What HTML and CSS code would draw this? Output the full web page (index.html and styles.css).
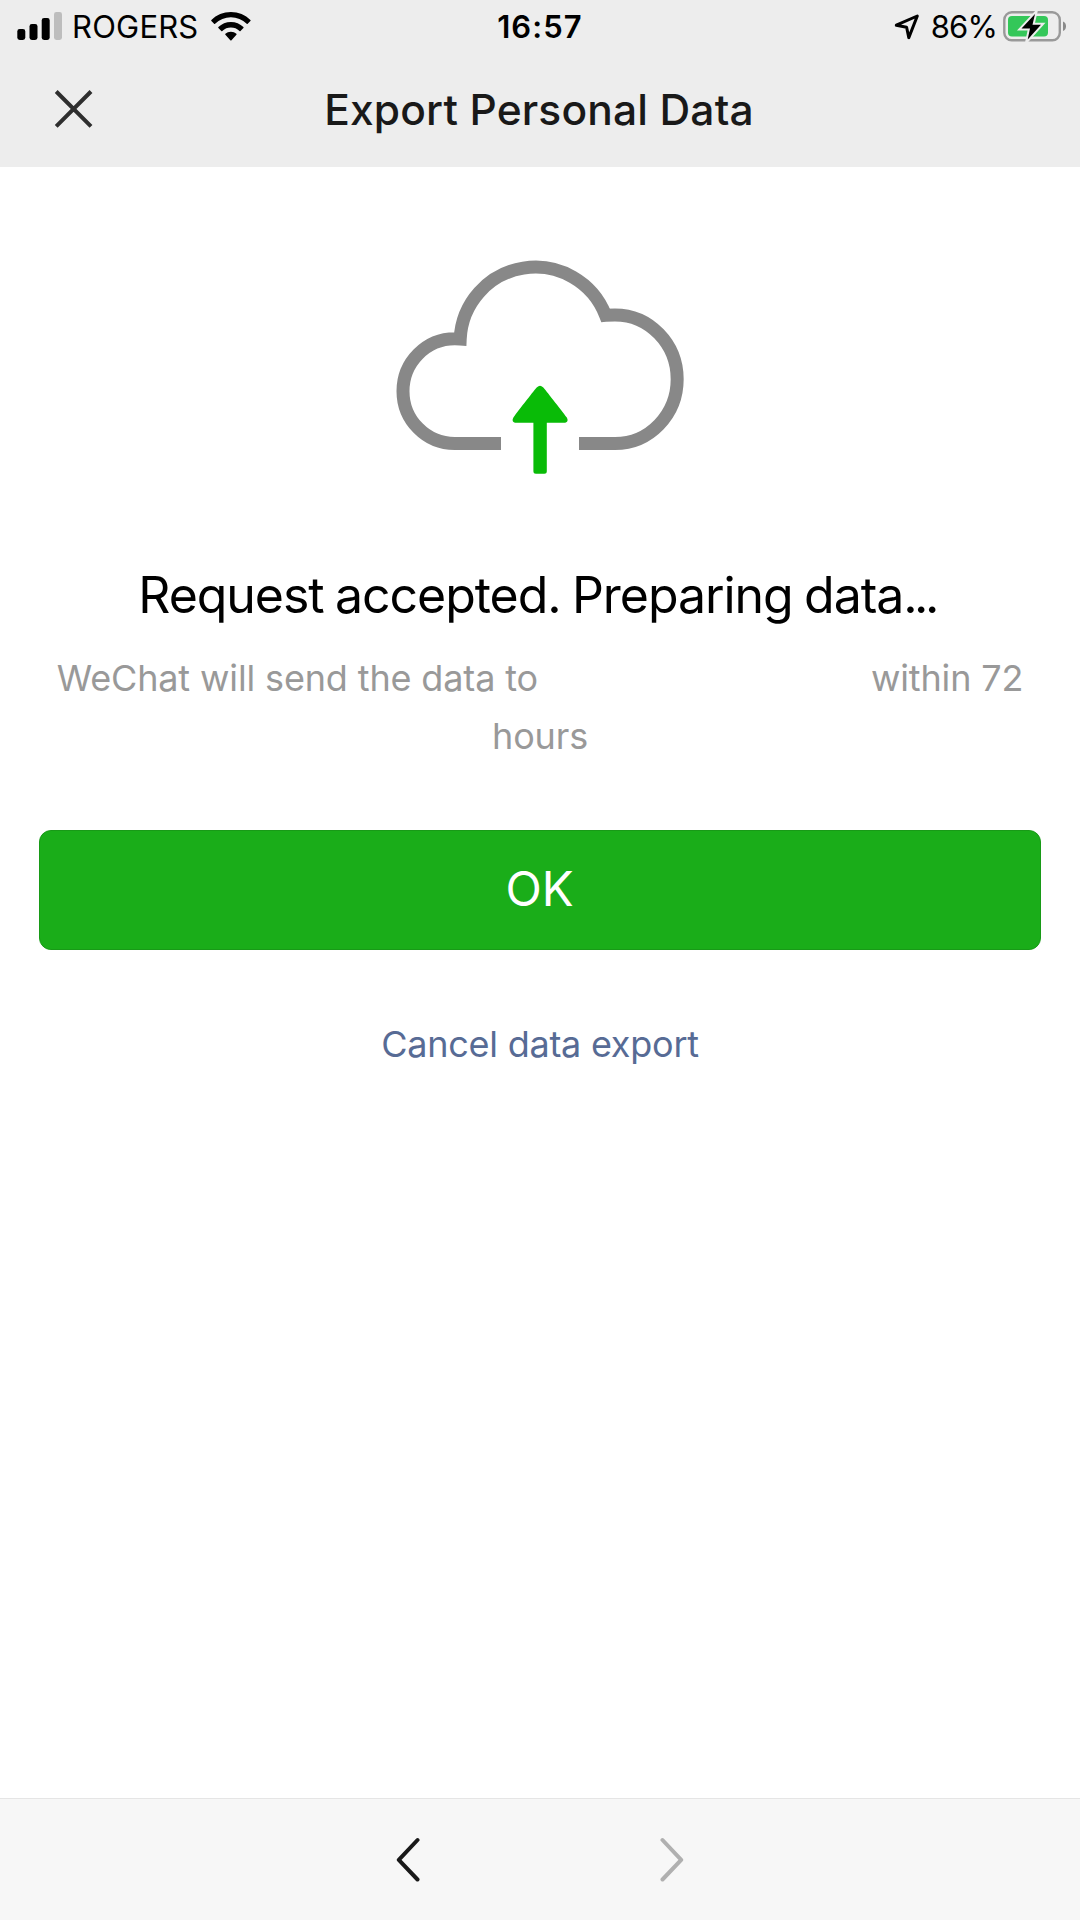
FILE: index.html
```
<!DOCTYPE html>
<html lang="en">
<head>
    <meta charset="UTF-8">
    <meta name="viewport" content="width=device-width, initial-scale=1.0">
    <title>Export Personal Data</title>
    <link rel="stylesheet" href="styles.css">
</head>
<body>
    <header class="header">
        <div class="status-bar">
            <div class="status-left">
                <svg class="signal-icon" width="46" height="30" viewBox="0 0 46 30">
                    <rect x="0.3" y="18" width="8" height="11" rx="2.4"/>
                    <rect x="12.5" y="13" width="8" height="16" rx="2.4"/>
                    <rect x="24.7" y="7" width="8" height="22" rx="2.4"/>
                    <rect class="signal-off" x="37" y="1" width="8" height="28" rx="2.4"/>
                </svg>
                <span class="carrier">ROGERS</span>
                <svg class="wifi-icon" width="40" height="30" viewBox="0 0 40 30">
                    <path d="M19.9 0C27.4 0 34.3 3 39.4 7.9Q39.9 8.4 39.4 8.9L36.7 11.7Q36.2 12.2 35.7 11.7A22.6 22.6 0 0 0 4.1 11.7Q3.6 12.2 3.1 11.7L.4 8.9Q-.1 8.4.4 7.9C5.5 3 12.4 0 19.9 0Z"/>
                    <path d="M19.9 10C24.7 10 29.1 11.9 32.4 15Q32.9 15.5 32.4 16L29.5 18.9Q29 19.4 28.5 18.9A12.7 12.7 0 0 0 11.3 18.9Q10.8 19.4 10.3 18.9L7.4 16Q6.9 15.5 7.4 15C10.7 11.9 15.1 10 19.9 10Z"/>
                    <path d="M19.9 19.7C22 19.7 24 20.5 25.4 21.8Q25.9 22.3 25.4 22.8L20.5 28.3Q19.9 28.9 19.3 28.3L14.4 22.8Q13.9 22.3 14.4 21.8C15.8 20.5 17.8 19.7 19.9 19.7Z"/>
                </svg>
            </div>
            <span class="clock">16:57</span>
            <div class="status-right">
                <svg class="location-icon" width="26" height="26" viewBox="0 0 26 26">
                    <path d="M2.3 11.2L23.3 2L14.8 23.6L12.6 13.2Z"/>
                </svg>
                <span class="battery-level">86%</span>
                <svg class="battery-icon" width="64" height="32" viewBox="0 0 64 32">
                    <rect class="battery-shell" x="1.3" y="2.3" width="55.5" height="28" rx="7.5"/>
                    <path class="battery-tip" d="M60 11.5C62 12.3 63 14 63 16.3S62 20.3 60 21.1Z"/>
                    <rect class="battery-fill" x="5" y="6" width="40" height="20.5" rx="4"/>
                    <path class="battery-bolt" d="M32 4L18.5 18.6H27L24.7 29.5L38 14.7H29.5Z"/>
                </svg>
            </div>
        </div>
        <div class="nav-bar">
            <button class="close-button" aria-label="Close">
                <svg width="40" height="40" viewBox="0 0 40 40">
                    <path d="M2.2 2.5L37 37.3M37 2.5L2.2 37.3"/>
                </svg>
            </button>
            <h1 class="nav-title">Export Personal Data</h1>
        </div>
    </header>

    <main class="content">
        <svg class="cloud-icon" width="320" height="250" viewBox="0 0 320 250">
            <path class="cloud" d="M121 203.5H74.8A51.8 52.35 0 0 1 74.8 98.8Q77.5 98.8 80.2 99A75.25 75.25 0 0 1 225.6 75.3Q230 74.9 235 74.9A62.2 64.3 0 0 1 235 203.5H199"/>
            <path class="arrow" d="M157 147.2Q160 144.2 163 147.2C165 149 181 170 186.8 177.4Q189 181.5 185.2 182.7H166.8V231.2Q166.8 233.7 164.3 233.7H155.9Q153.4 233.7 153.4 231.2V182.7H135Q131.2 181.5 133.4 177.4C139 170 155 149 157 147.2Z"/>
        </svg>

        <h2 class="message-title">Request accepted. Preparing data<span class="dots">...</span></h2>
        <p class="message-text">WeChat will send the data to <span class="email"></span> within 72 hours</p>

        <button class="ok-button">OK</button>
        <a class="cancel-link">Cancel data export</a>
    </main>

    <footer class="toolbar">
        <svg class="arrow-back" width="24" height="46" viewBox="0 0 24 46">
            <path d="M21.5 3L2.8 22.8L21.5 42.5"/>
        </svg>
        <svg class="arrow-forward" width="24" height="46" viewBox="0 0 24 46">
            <path d="M2.5 3L21.2 22.8L2.5 42.5"/>
        </svg>
    </footer>
</body>
</html>
```
FILE: styles.css
```
* {
    box-sizing: border-box;
}

body {
    margin: 0;
    height: 100vh;
    display: flex;
    flex-direction: column;
    background: #fff;
    color: #000;
    font-family: Inter, "Liberation Sans", sans-serif;
    overflow: hidden;
}

button {
    padding: 0;
    border: none;
    background: none;
    font-family: inherit;
}

svg {
    display: block;
    flex-shrink: 0;
}

h1, h2, p {
    margin: 0;
}

.header {
    height: 167px;
    background: #ededed;
}

.status-bar {
    height: 54px;
    padding: 0 13px 0 17px;
    display: grid;
    grid-template-columns: 1fr auto 1fr;
    align-items: center;
    font-size: 31px;
    line-height: 54px;
}

.status-left,
.status-right {
    display: flex;
    align-items: center;
}

.status-right {
    justify-content: flex-end;
}

.signal-icon {
    margin-right: 9px;
    margin-bottom: 3px;
}

.signal-off {
    fill: #bdbdbd;
}

.carrier {
    width: 126px;
    margin-right: 13px;
    letter-spacing: 0.2px;
}

.wifi-icon {
    margin-top: -1px;
}

.clock {
    margin-right: 4px;
    font-weight: 600;
    letter-spacing: 1.1px;
}

.location-icon {
    margin-right: 11px;
    fill: none;
    stroke: #000;
    stroke-width: 3;
    stroke-linejoin: round;
}

.battery-level {
    margin-right: 6px;
    letter-spacing: -0.9px;
}

.battery-icon {
    margin-top: -2px;
}

.battery-shell {
    fill: none;
    stroke: #999;
    stroke-width: 2.4;
}

.battery-tip {
    fill: #8a8a8a;
}

.battery-fill {
    fill: #34c759;
}

.battery-bolt {
    fill: #000;
    stroke: #ededed;
    stroke-width: 4;
    paint-order: stroke;
}

.nav-bar {
    height: 112px;
    padding: 0 56px 0 54px;
    display: grid;
    grid-template-columns: 40px 1fr 40px;
    align-items: center;
}

.close-button {
    height: 40px;
    margin-bottom: 3px;
}

.close-button path {
    fill: none;
    stroke: #2e2e2e;
    stroke-width: 4;
}

.nav-title {
    font-size: 42.5px;
    font-weight: 500;
    line-height: 60px;
    text-align: center;
    color: #191919;
    letter-spacing: 0.15px;
}

.content {
    flex: 1;
    padding: 73px 39px 0;
    display: flex;
    flex-direction: column;
    align-items: center;
}

.cloud {
    fill: none;
    stroke: #888;
    stroke-width: 13;
}

.arrow {
    fill: #09bb07;
}

.message-title {
    margin-top: 70px;
    margin-right: 6px;
    font-size: 50px;
    font-weight: 400;
    line-height: 70px;
    white-space: nowrap;
    letter-spacing: -1.05px;
    word-spacing: -1.6px;
}

.message-title .dots {
    letter-spacing: -3.6px;
}

.message-text {
    width: 1002px;
    margin-top: 19px;
    font-size: 36px;
    line-height: 58px;
    text-align: center;
    color: #999;
    letter-spacing: -0.14px;
}

/* address is left blank */
.email {
    display: inline-block;
    width: 313px;
}

.ok-button {
    width: 1002px;
    height: 120px;
    margin-top: 65px;
    padding: 0 1px 3px 0;
    border: 1px solid #189a17;
    border-radius: 12px;
    background: #1aad19;
    color: #fff;
    font-size: 47.5px;
}

.cancel-link {
    margin-top: 64px;
    font-size: 36px;
    line-height: 60px;
    color: #576b95;
    letter-spacing: -0.25px;
}

.toolbar {
    height: 122px;
    display: flex;
    justify-content: center;
    align-items: center;
    gap: 240px;
    border-top: 1px solid #e5e5e5;
    background: #f7f7f7;
}

.toolbar path {
    fill: none;
    stroke: #191919;
    stroke-width: 4;
    stroke-linecap: round;
    stroke-linejoin: round;
}

.toolbar .arrow-forward path {
    stroke: #b0b0b0;
}
```
